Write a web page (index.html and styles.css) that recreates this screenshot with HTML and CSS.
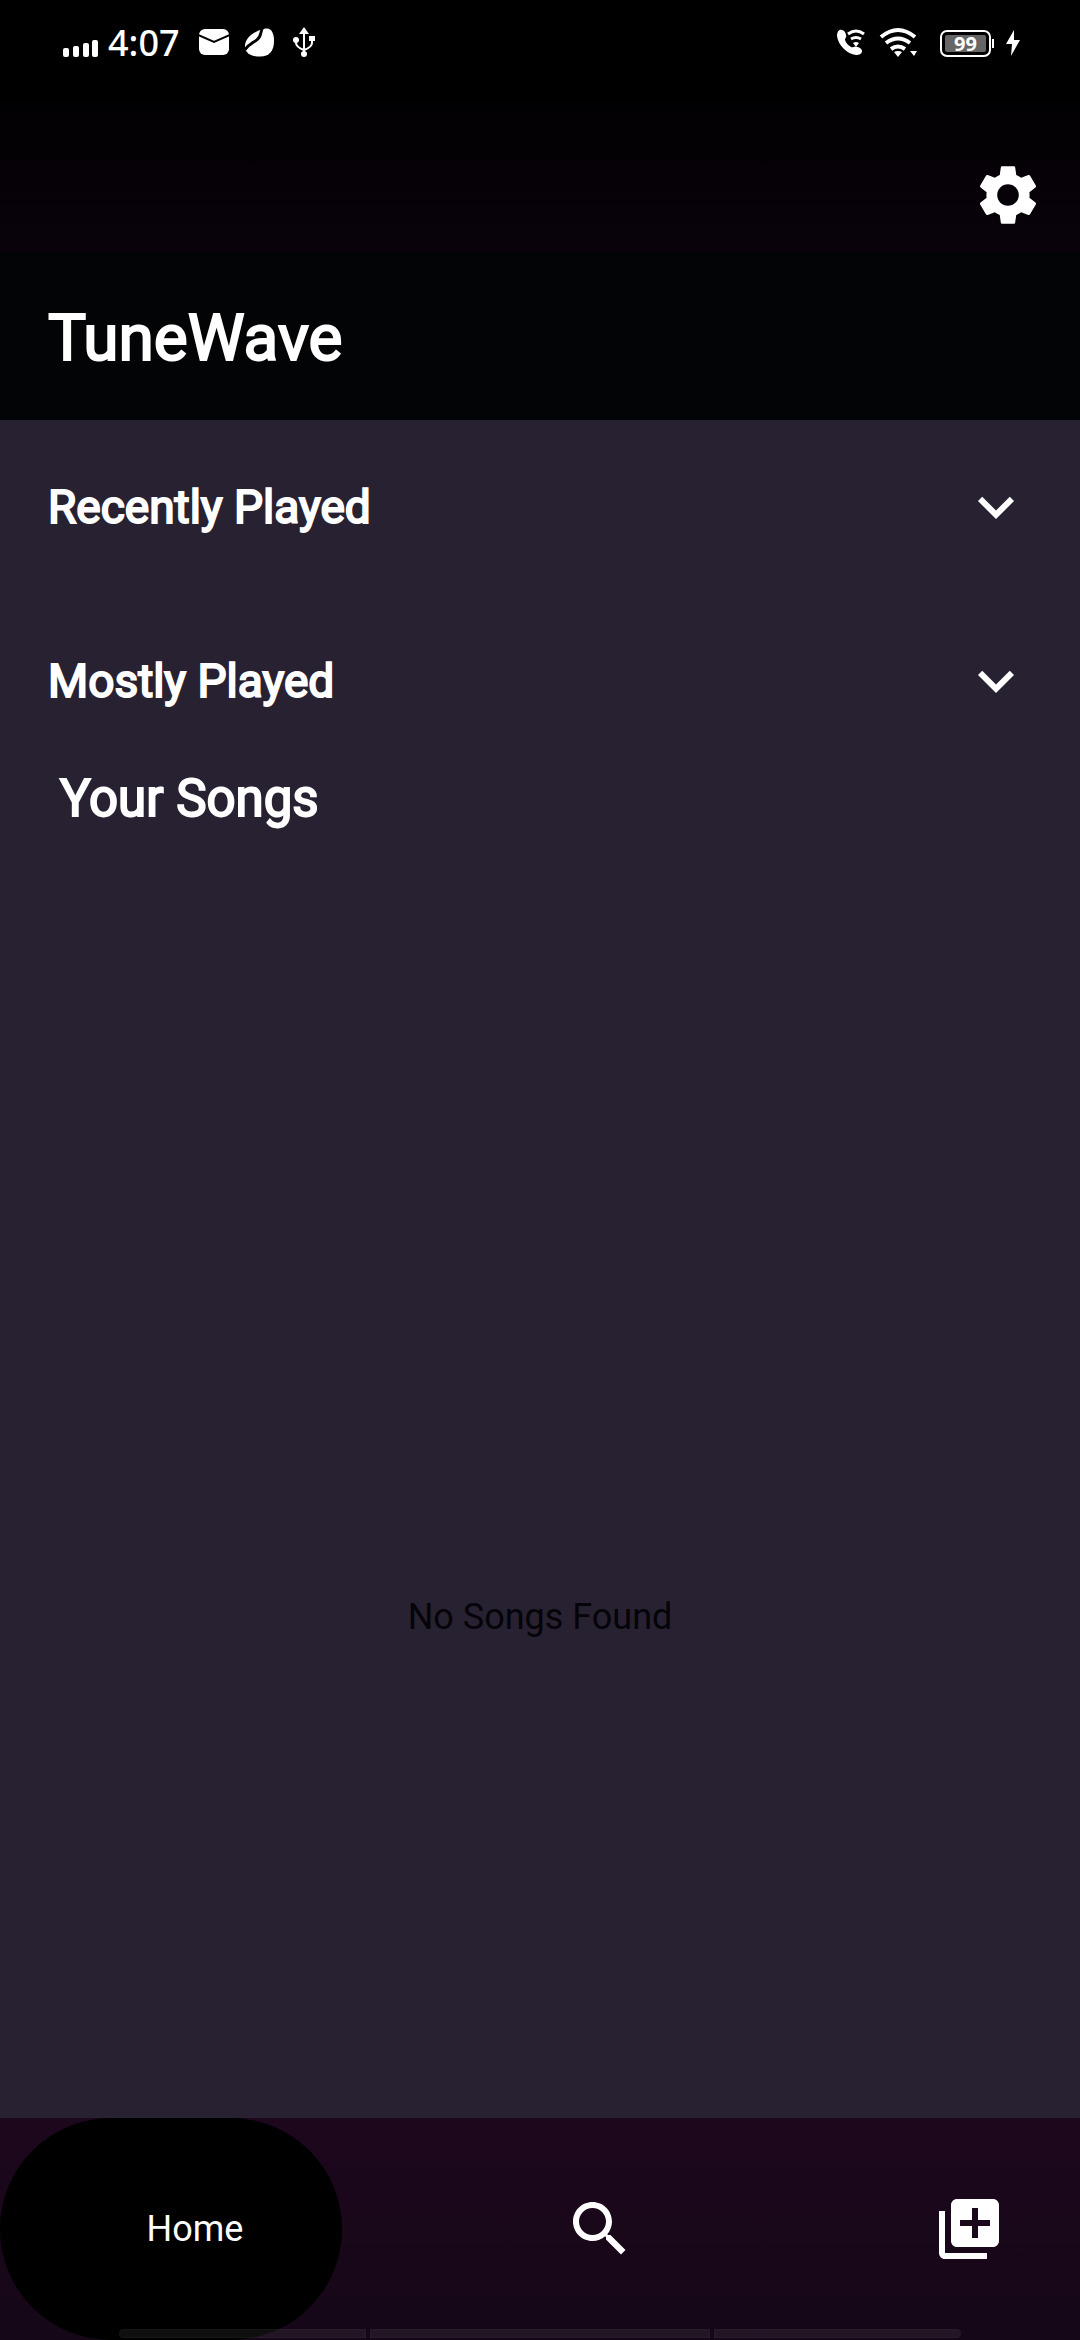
FILE: index.html
```html
<!DOCTYPE html>
<html lang="en">
<head>
<meta charset="utf-8">
<meta name="viewport" content="width=device-width, initial-scale=1">
<title>TuneWave</title>
<link rel="stylesheet" href="styles.css">
</head>
<body>
<header class="top">
  <div class="status">
    <div class="status-side">
      <svg class="signal" width="36" height="40" viewBox="0 0 36 40" fill="#fff"><rect x="0" y="25" width="6" height="9" rx="2"/><rect x="10" y="23" width="6" height="11" rx="2"/><rect x="20" y="20" width="6" height="14" rx="2"/><rect x="29" y="17" width="6" height="17" rx="2"/></svg>
      <span class="clock">4:07</span>
      <svg width="32" height="40" viewBox="0 0 32 40"><rect x="1" y="6" width="30" height="26" rx="6" fill="#fff"/><path d="M0 12l16 7 16-7" fill="none" stroke="#000" stroke-width="2"/></svg>
      <svg width="31" height="40" viewBox="0 0 32 40"><path d="M22 5c7-1 9 6 9 13 0 10-5 16-14 16C8 34 1 31 1 23 1 14 12 7 22 5z" fill="#fff"/><path d="M20 3c-4 5-1 10-7 14-4 3-8 4-12 10" fill="none" stroke="#000" stroke-width="3"/></svg>
      <svg class="usb" width="24" height="40" viewBox="0 0 24 40"><path d="M12 9v22M4 17v3q0 4 8 7M20 16v4q0 4-8 7" fill="none" stroke="#fff" stroke-width="2"/><path d="M12 4l5 7H7z" fill="#fff"/><circle cx="12" cy="31" r="3" fill="#fff"/><circle cx="4" cy="17" r="3" fill="#fff"/><path d="M17 13h6v5h-6z" fill="#fff"/></svg>
    </div>
    <div class="status-side">
      <svg width="30" height="40" viewBox="0 0 30 40"><path d="M6 7C3 6 1 9 1 13c1 9 10 18 19 19 3 0 6-1 6-4 0-2-3-4-5-4-3-1-4 1-6 0-3-2-5-4-6-7 0-2 2-3 1-5 0-2-2-5-4-5z" fill="#fff"/><path d="M12 11q8-6 16 0M15 16q5-3 10 0" fill="none" stroke="#fff" stroke-width="3"/><path d="M17 20q3-2 6 0l-3 4z" fill="#fff"/></svg>
      <svg class="wifi" width="38" height="40" viewBox="0 0 38 40"><path d="M2 14Q19 0 36 14M7 20q12-9 24 0M12 26q7-5 14 0" fill="none" stroke="#fff" stroke-width="4"/><path d="M15 29q4-2 8 0l-4 5zM31 28h7l-3 5z" fill="#fff"/></svg>
      <span class="battery"><span class="charge">99</span></span>
      <svg width="16" height="40" viewBox="0 0 16 40"><path d="M9 7L1 21h6l-1 12 9-16H9z" fill="#fff"/></svg>
    </div>
  </div>
  <div class="actions">
    <button class="icon-button" aria-label="Settings">
      <svg class="icon" viewBox="0 0 24 24"><path d="M19.14 12.94c.04-.3.06-.61.06-.94 0-.32-.02-.64-.07-.94l2.03-1.58c.18-.14.23-.41.12-.61l-1.92-3.32c-.12-.22-.37-.29-.59-.22l-2.39.96c-.5-.38-1.03-.7-1.62-.94l-.36-2.54c-.04-.24-.24-.41-.48-.41h-3.84c-.24 0-.43.17-.47.41l-.36 2.54c-.59.24-1.13.57-1.62.94l-2.39-.96c-.22-.08-.47 0-.59.22L2.74 8.87c-.12.21-.08.47.12.61l2.03 1.58c-.05.3-.09.63-.09.94s.02.64.07.94l-2.03 1.58c-.18.14-.23.41-.12.61l1.92 3.32c.12.22.37.29.59.22l2.39-.96c.5.38 1.03.7 1.62.94l.36 2.54c.05.24.24.41.48.41h3.84c.24 0 .44-.17.47-.41l.36-2.54c.59-.24 1.13-.56 1.62-.94l2.39.96c.22.08.47 0 .59-.22l1.92-3.32c.12-.22.07-.47-.12-.61l-2.01-1.58zM12 15.6c-1.98 0-3.6-1.62-3.6-3.6s1.62-3.6 3.6-3.6 3.6 1.62 3.6 3.6-1.62 3.6-3.6 3.6z"/></svg>
    </button>
  </div>
</header>
<div class="title-bar"><h1 class="title">TuneWave</h1></div>
<main class="content">
  <button class="section"><span>Recently Played</span>
    <svg class="icon" viewBox="0 0 24 24"><path d="M7.41 8.59L12 13.17l4.59-4.58L18 10l-6 6-6-6z"/></svg></button>
  <button class="section"><span>Mostly Played</span>
    <svg class="icon" viewBox="0 0 24 24"><path d="M7.41 8.59L12 13.17l4.59-4.58L18 10l-6 6-6-6z"/></svg></button>
  <h2 class="songs-title">Your Songs</h2>
  <div class="songs"><p class="empty">No Songs Found</p></div>
</main>
<nav class="nav">
  <button class="tab tab-active">Home</button>
  <button class="tab" aria-label="Search"><svg class="icon" viewBox="0 0 24 24"><path d="M15.5 14h-.79l-.28-.27C15.41 12.59 16 11.11 16 9.5 16 5.91 13.09 3 9.5 3S3 5.91 3 9.5 5.91 16 9.5 16c1.61 0 3.09-.59 4.23-1.57l.27.28v.79l5 4.99L20.49 19l-4.99-5zm-6 0C7.01 14 5 11.99 5 9.5S7.01 5 9.5 5 14 7.01 14 9.5 11.99 14 9.5 14z"/></svg></button>
  <button class="tab" aria-label="Library"><svg class="icon" viewBox="0 0 24 24"><path d="M4 6H2v14c0 1.1.9 2 2 2h14v-2H4V6zm16-4H8c-1.1 0-2 .9-2 2v12c0 1.1.9 2 2 2h12c1.1 0 2-.9 2-2V4c0-1.1-.9-2-2-2zm-1 9h-4v4h-2v-4H9V9h4V5h2v4h4v2z"/></svg></button>
  <div class="gesture"><i></i><i></i><i></i></div>
</nav>
</body>
</html>
```

FILE: styles.css
```css
* { box-sizing: border-box; }

body {
  margin: 0;
  min-height: 100vh;
  display: flex;
  flex-direction: column;
  background: #282132;
  color: #fff;
  font-family: Roboto, sans-serif;
}

button {
  border: 0;
  margin: 0;
  padding: 0;
  background: none;
  color: inherit;
  font: inherit;
  cursor: pointer;
}

svg { display: block; flex: none; }

.icon { width: 72px; height: 72px; fill: #fff; }

.top { background: linear-gradient(#000 30%, #09020b); }

.status {
  display: flex;
  justify-content: space-between;
  height: 84px;
  padding: 23px 59px 21px 63px;
}

.status-side { display: flex; align-items: center; gap: 14px; }

.signal { margin-right: -5px; }

.clock {
  margin-right: 4px;
  font: 500 36px/40px "Noto Sans", sans-serif;
}

.usb { margin-left: 3px; }

.wifi { margin: 0 9px 0 -1px; }

.battery {
  position: relative;
  width: 51px;
  height: 27px;
  padding: 3px;
  border: 2px solid #fff;
  border-radius: 7px;
}

.battery::after {
  content: "";
  position: absolute;
  top: 7px;
  right: -5px;
  width: 2px;
  height: 9px;
  background: #fff;
}

.charge {
  display: block;
  height: 17px;
  border-radius: 2px;
  background: #666;
  font: 700 20px/17px "Noto Sans", sans-serif;
  text-align: center;
}

.actions {
  display: flex;
  justify-content: flex-end;
  align-items: center;
  height: 168px;
  padding: 54px 36px 0 0;
}

.title-bar {
  display: flex;
  align-items: center;
  height: 168px;
  padding: 4px 48px 0;
  background: #030405;
}

.title, .section, .songs-title {
  margin: 0;
  font-weight: 400;
  -webkit-text-stroke: 2px #fff;
}

.title { font-size: 64px; }

.content { flex: 1; display: flex; flex-direction: column; }

.section {
  display: flex;
  justify-content: space-between;
  align-items: center;
  height: 174px;
  padding: 0 48px;
  font-size: 46px;
  text-align: left;
}

.songs-title { padding: 0 60px; font-size: 51px; line-height: 62px; }

.songs {
  flex: 1;
  display: flex;
  align-items: center;
  justify-content: center;
  padding-top: 286px;
}

.empty { margin: 0; color: #050408; font-size: 36px; }

.nav {
  position: relative;
  display: grid;
  grid-template-columns: 57fr 86fr 37fr;
  height: 222px;
  background: linear-gradient(#1d071d, #150717);
}

.tab {
  display: flex;
  align-items: center;
  justify-content: center;
  font-size: 36px;
}

.tab-active { padding-left: 48px; border-radius: 111px; background: #000; }

.gesture {
  position: absolute;
  left: 11%;
  right: 11%;
  bottom: 2px;
  display: grid;
  grid-template-columns: 247fr 341fr 247fr;
  gap: 4px;
  height: 9px;
}

.gesture i { background: rgba(255, 255, 255, 0.06); border: 1px solid rgba(255, 255, 255, 0.03); }
.gesture i:first-child { border-radius: 5px 0 0 5px; }
.gesture i:last-child { border-radius: 0 5px 5px 0; }
```
